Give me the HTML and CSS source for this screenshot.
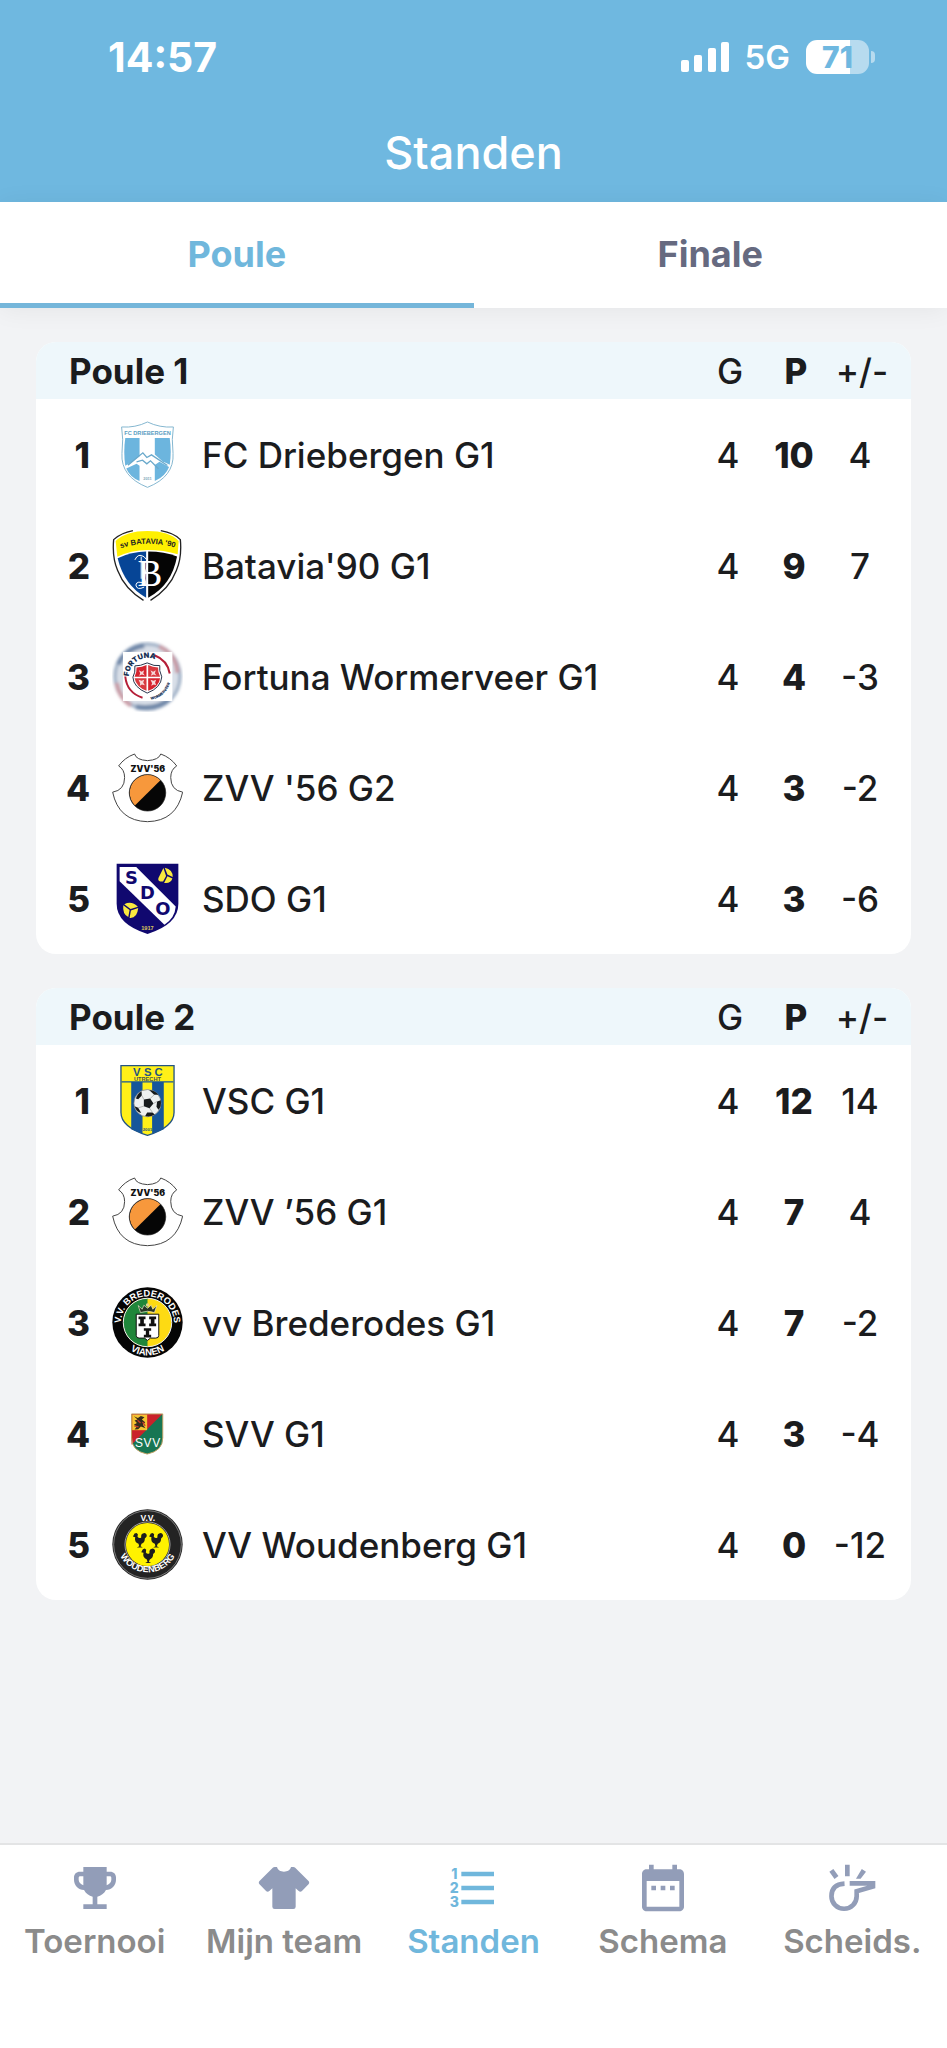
FILE: index.html
```html
<!DOCTYPE html>
<html lang="nl">
<head>
    <meta charset="UTF-8">
    <meta name="viewport" content="width=device-width, initial-scale=1.0">
    <title>Standen</title>
    <link rel="stylesheet" href="styles.css">
</head>
<body>
    <header class="header">
        <div class="status-bar">
            <span class="time">14:57</span>
            <div class="status-icons">
                <svg class="signal" viewBox="0 0 48 30" aria-hidden="true">
                    <rect x="0" y="18" width="8" height="12" rx="2"/>
                    <rect x="13" y="13" width="8" height="17" rx="2"/>
                    <rect x="27" y="6" width="8" height="24" rx="2"/>
                    <rect x="40" y="0" width="8" height="30" rx="2"/>
                </svg>
                <span class="network">5G</span>
                <div class="battery"><span class="battery-level">71</span></div>
            </div>
        </div>
        <h1 class="title">Standen</h1>
    </header>

    <nav class="tabs">
        <button type="button" class="tab active">Poule</button>
        <button type="button" class="tab">Finale</button>
    </nav>

    <main class="content">
        <section class="card">
            <table class="standings">
                <thead>
                    <tr>
                        <th class="group" colspan="3">Poule 1</th>
                        <th class="num">G</th>
                        <th class="num points">P</th>
                        <th class="num diff">+/-</th>
                    </tr>
                </thead>
                <tbody>
                    <tr>
                        <td class="rank">1</td>
                        <td class="crest">
                            <svg viewBox="38 31 214 214" aria-hidden="true">
                                <path d="M145 40Q182 58 223 55Q217 90 222 135Q226 205 145 237Q64 205 68 135Q73 90 67 55Q108 58 145 40Z" fill="#fff" stroke="#84b6d0" stroke-width="3"/>
                                <path d="M78 88H121V143L99 160L78 172Q72 130 78 88Z" fill="#6cb5de"/>
                                <path d="M167 88H212Q218 130 212 169L190 158L167 138Z" fill="#6cb5de"/>
                                <path d="M81 180L112 166L121 172V218Q91 205 81 180ZM167 170L181 160L210 176Q199 205 167 218Z" fill="#6cb5de"/>
                                <path d="M86 170L131 133L143 147L157 139L205 171M112 160L130 155L143 166L154 157L178 181" fill="none" stroke="#6aa9cb" stroke-width="4"/>
                                <text x="145" y="80" class="crest-text" font-size="17" fill="#5a9dc2">FC DRIEBERGEN</text>
                                <text x="145" y="216" class="crest-text" font-size="12" fill="#84a9bb">2011</text>
                            </svg>
                        </td>
                        <td class="team">FC Driebergen G1</td>
                        <td class="num">4</td>
                        <td class="num points">10</td>
                        <td class="num diff">4</td>
                    </tr>
                    <tr>
                        <td class="rank">2</td>
                        <td class="crest">
                            <svg viewBox="38 363 214 214" aria-hidden="true">
                                <path d="M101 365Q65 372 43 392Q38 445 55 485Q76 540 133 575M185 365Q225 372 244 392Q249 445 232 485Q211 540 154 575" fill="none" stroke="#222" stroke-width="4"/>
                                <path d="M49 396Q80 366 145 366Q210 366 239 396L236 436Q195 423 145 423Q95 423 54 444Z" fill="#fff001"/>
                                <path d="M55 448Q98 428 141 428V567Q75 530 55 448Z" fill="#064596"/>
                                <path d="M147 428Q196 428 234 443Q218 530 147 567Z" fill="#050505"/>
                                <path id="batavia-arc" d="M58 420Q145 390 234 418" fill="none"/>
                                <text class="crest-text" font-size="23" fill="#222"><textPath href="#batavia-arc" startOffset="50%">sv BATAVIA '90</textPath></text>
                                <text x="152" y="531" class="crest-letter" font-size="112" fill="#fff">B</text>
                                <path d="M107 453Q117 431 135 444Q153 458 138 490Q132 511 141 526Q112 513 110 529Q113 546 135 535M126 443V510M144 428V567" fill="none" stroke="#fff" stroke-width="3"/>
                            </svg>
                        </td>
                        <td class="team">Batavia'90 G1</td>
                        <td class="num">4</td>
                        <td class="num points">9</td>
                        <td class="num diff">7</td>
                    </tr>
                    <tr>
                        <td class="rank">3</td>
                        <td class="crest">
                            <svg viewBox="38 34 214 214" aria-hidden="true">
                                <defs><filter id="soft"><feGaussianBlur stdDeviation="5"/></filter></defs>
                                <g filter="url(#soft)" fill="none">
                                    <circle cx="145" cy="141" r="98" fill="#d9dfe8" stroke="#9fb0c6" stroke-width="10"/>
                                    <path d="M180 51Q232 75 235 130M52 160Q60 205 95 228" stroke="#c99ba5" stroke-width="13"/>
                                    <path d="M58 105Q75 58 135 48M110 232Q175 243 215 205" stroke="#6f87a8" stroke-width="15"/>
                                </g>
                                <rect x="71" y="67" width="149" height="148" fill="#fff"/>
                                <path d="M166 77Q205 92 212 132M78 141Q83 190 130 205" fill="none" stroke="#b51f38" stroke-width="6"/>
                                <path id="fortuna-arc" d="M89 141A56 56 0 0 1 168 90" fill="none"/>
                                <path id="wormer-arc" d="M134 211A70 70 0 0 0 215 140" fill="none"/>
                                <text class="crest-text heavy" font-size="22" fill="#173155"><textPath href="#fortuna-arc" startOffset="50%">FORTUNA</textPath></text>
                                <text class="crest-text heavy" font-size="11" fill="#173155"><textPath href="#wormer-arc" startOffset="50%">WORMERVEER</textPath></text>
                                <path d="M107 109Q122 110 144 100Q166 111 182 108Q179 122 188 142Q186 175 144 191Q102 173 101 143Q109 130 107 109Z" fill="#fff" stroke="#27334b" stroke-width="3"/>
                                <path d="M112 114Q129 113 142 106V142H106Q113 130 112 114ZM147 146H183Q180 172 147 184Z" fill="#d5242f"/>
                                <path d="M147 106Q160 113 177 114Q176 130 183 142H147ZM106 146H142V184Q111 172 106 146Z" fill="#d83a40"/>
                                <path d="M119 122l8 5 8-5-3 9 5 7-9-3-8 4 3-8zM154 122l8 5 8-5-3 9 5 7-9-3-8 4 3-8zM118 151l9 3 8-3-3 8 5 8-9-2-6 4 1-8zM154 151l9 3 8-3-3 8 3 8-7-2-8 4 3-8z" fill="#f7d8d9"/>
                            </svg>
                        </td>
                        <td class="team">Fortuna Wormerveer G1</td>
                        <td class="num">4</td>
                        <td class="num points">4</td>
                        <td class="num diff">-3</td>
                    </tr>
                    <tr>
                        <td class="rank">4</td>
                        <td class="crest">
                            <svg viewBox="38 365 214 214" aria-hidden="true">
                                <g id="zvv">
                                    <path d="M106 371Q111 389 145 391Q179 389 185 371Q215 382 233 407Q215 418 215 442Q215 480 251 486Q232 573 145 575Q58 573 40 486Q76 480 76 442Q76 418 58 407Q76 382 106 371Z" fill="#fff" stroke="#444" stroke-width="3"/>
                                    <circle cx="145" cy="488" r="55" fill="#060606"/>
                                    <path d="M107 526A54 54 0 0 1 184 450Z" fill="#f7983c"/>
                                    <circle cx="145" cy="488" r="55" fill="none" stroke="#222" stroke-width="2"/>
                                    <text x="146" y="425" class="crest-text heavy" font-size="26" fill="#111">ZVV'56</text>
                                </g>
                            </svg>
                        </td>
                        <td class="team">ZVV '56 G2</td>
                        <td class="num">4</td>
                        <td class="num points">3</td>
                        <td class="num diff">-2</td>
                    </tr>
                    <tr>
                        <td class="rank">5</td>
                        <td class="crest">
                            <svg viewBox="38 697 214 214" aria-hidden="true">
                                <path d="M52 699H238V820Q238 882 145 911Q52 882 52 820Z" fill="#10086f"/>
                                <path d="M61 709H111L230 828Q228 862 196 883L61 752Z" fill="#fff"/>
                                <g class="crest-text wide" font-size="54" fill="#10086f">
                                    <text x="97" y="759">S</text>
                                    <text x="145" y="806">D</text>
                                    <text x="191" y="853">O</text>
                                </g>
                                <path d="M193 712L178 742Q174 754 192 753L201 736ZM197 711L205 732L221 739Q222 717 197 711ZM205 737L195 757Q215 760 220 744Z" fill="#fae93f"/>
                                <path d="M72 824L91 839L87 860Q69 850 72 824ZM75 821L94 836L116 829Q98 810 75 821ZM117 833L95 840L91 863Q114 865 117 833Z" fill="#fae93f"/>
                                <text x="145" y="899" class="crest-text" font-size="17" fill="#d8c95c">1917</text>
                            </svg>
                        </td>
                        <td class="team">SDO G1</td>
                        <td class="num">4</td>
                        <td class="num points">3</td>
                        <td class="num diff">-6</td>
                    </tr>
                </tbody>
            </table>
        </section>

        <section class="card">
            <table class="standings">
                <thead>
                    <tr>
                        <th class="group" colspan="3">Poule 2</th>
                        <th class="num">G</th>
                        <th class="num points">P</th>
                        <th class="num diff">+/-</th>
                    </tr>
                </thead>
                <tbody>
                    <tr>
                        <td class="rank">1</td>
                        <td class="crest">
                            <svg viewBox="38 47 214 214" aria-hidden="true">
                                <path d="M65 49H225V190Q225 234 145 259Q65 234 65 190Z" fill="#fff018" stroke="#245482" stroke-width="4"/>
                                <path d="M67 98H223M98 98H128V251L98 239ZM161 98H192V239L161 251Z" fill="#17569a" stroke="#17569a" stroke-width="4"/>
                                <g class="crest-text" font-size="34" fill="#245482">
                                    <text x="113" y="79">V</text>
                                    <text x="146" y="79">S</text>
                                    <text x="178" y="79">C</text>
                                </g>
                                <text x="145" y="95" class="crest-text" font-size="17" fill="#464f50">UTRECHT</text>
                                <circle cx="145" cy="162" r="41" fill="#eef0f0" stroke="#777" stroke-width="2"/>
                                <path d="M134 151L153 148L163 163L151 177L134 171ZM110 148Q116 131 127 127L128 139L117 150ZM150 122Q169 124 178 137L165 137ZM174 157L185 153Q188 172 178 182L172 173ZM106 171L117 176L126 192Q111 187 106 171ZM144 190L160 190L167 196Q152 205 138 201Z" fill="#171a1c"/>
                                <path d="M128 139L134 151M153 148L165 137M163 163L174 157M151 177L160 190M134 171L117 176" stroke="#999" stroke-width="2"/>
                                <text x="145" y="247" class="crest-text" font-size="13" fill="#245482">2001</text>
                            </svg>
                        </td>
                        <td class="team">VSC G1</td>
                        <td class="num">4</td>
                        <td class="num points">12</td>
                        <td class="num diff">14</td>
                    </tr>
                    <tr>
                        <td class="rank">2</td>
                        <td class="crest"><svg viewBox="38 365 214 214" aria-hidden="true"><use href="#zvv"/></svg></td>
                        <td class="team">ZVV ’56 G1</td>
                        <td class="num">4</td>
                        <td class="num points">7</td>
                        <td class="num diff">4</td>
                    </tr>
                    <tr>
                        <td class="rank">3</td>
                        <td class="crest">
                            <svg viewBox="38 50 214 214" aria-hidden="true">
                                <circle cx="145" cy="157" r="106" fill="#050505"/>
                                <circle cx="145" cy="157" r="73" fill="#fdda13"/>
                                <path d="M145 84A73 73 0 0 0 145 230Z" fill="#20863a"/>
                                <circle cx="145" cy="157" r="73" fill="none" stroke="#eee" stroke-width="3"/>
                                <path id="brede-arc" d="M68 180A80 80 0 1 1 222 180" fill="none"/>
                                <path id="vianen-arc" d="M46 157A99 99 0 0 0 244 157" fill="none"/>
                                <text class="crest-text" font-size="28" fill="#fff"><textPath href="#brede-arc" startOffset="50%">V.V. BREDERODES</textPath></text>
                                <text class="crest-text" font-size="29" fill="#fff"><textPath href="#vianen-arc" startOffset="50%">VIANEN</textPath></text>
                                <path d="M111 132H179V196Q179 204 170 204H154L145 211L136 204H120Q111 204 111 196Z" fill="#fff" stroke="#111" stroke-width="3"/>
                                <path d="M118 139H139V147H134V160H139V168H118V160H123V147H118ZM150 139H171V147H166V160H171V168H150V160H155V147H150ZM134 174H156V182H150V194H156V202H134V194H140V182H134Z" fill="#111"/>
                                <path d="M117 106L129 117L134 105L145 114L156 105L161 117L173 106L166 127Q145 119 124 127Z" fill="#263323" stroke="#f6ead0" stroke-width="2"/>
                                <circle cx="145" cy="104" r="5" fill="#e3d28a"/>
                            </svg>
                        </td>
                        <td class="team">vv Brederodes G1</td>
                        <td class="num">4</td>
                        <td class="num points">7</td>
                        <td class="num diff">-2</td>
                    </tr>
                    <tr>
                        <td class="rank">4</td>
                        <td class="crest">
                            <svg viewBox="38 382 214 214" aria-hidden="true">
                                <path d="M97 430H191V502Q191 542 144 551Q97 542 97 502Z" fill="#177653"/>
                                <path d="M97 430H190L97 523Z" fill="#ca222b"/>
                                <path d="M99 432H144V479H99Z" fill="#f6c431"/>
                                <path d="M104 437l12 5 9-6 11 4-8 7 10 8-7 8 8 10-14-5-8 8-11 1 7-9-9-5 9-6-7-7 9-3z" fill="#342b1e"/>
                                <path d="M115 449l9 8M105 466l13 3M130 454l8 12" stroke="#c83a29" stroke-width="4"/>
                                <path d="M97 430H191V502Q191 542 144 551Q97 542 97 502Z" fill="none" stroke="#c0a064" stroke-width="3"/>
                                <g class="crest-text regular" font-size="36" fill="#fff">
                                    <text x="119" y="529">S</text>
                                    <text x="145" y="529">V</text>
                                    <text x="171" y="529">V</text>
                                </g>
                            </svg>
                        </td>
                        <td class="team">SVV G1</td>
                        <td class="num">4</td>
                        <td class="num points">3</td>
                        <td class="num diff">-4</td>
                    </tr>
                    <tr>
                        <td class="rank">5</td>
                        <td class="crest">
                            <svg viewBox="38 713 214 214" aria-hidden="true">
                                <circle cx="145" cy="820" r="106" fill="#232323"/>
                                <circle cx="145" cy="820" r="102" fill="none" stroke="#aaa" stroke-width="2"/>
                                <circle cx="145" cy="820" r="65" fill="#fff200"/>
                                <circle cx="145" cy="820" r="68" fill="none" stroke="#ddd" stroke-width="2"/>
                                <path id="woud-arc" d="M51 810A94 94 0 1 0 239 810" fill="none"/>
                                <text x="146" y="748" class="crest-text" font-size="26" fill="#fff">V.V.</text>
                                <text class="crest-text" font-size="27" fill="#fff"><textPath href="#woud-arc" startOffset="50%">WOUDENBERG</textPath></text>
                                <g id="rooster" fill="#1d1d1d">
                                    <path d="M101 796L106 787L112 785L116 789L115 797Q120 803 126 799Q124 786 136 785Q145 788 142 797L137 802Q137 815 127 818L124 825L131 829H113L120 825L118 818Q104 812 108 798Z"/>
                                </g>
                                <use href="#rooster" x="49" y="0"/>
                                <use href="#rooster" x="25" y="47"/>
                            </svg>
                        </td>
                        <td class="team">VV Woudenberg G1</td>
                        <td class="num">4</td>
                        <td class="num points">0</td>
                        <td class="num diff">-12</td>
                    </tr>
                </tbody>
            </table>
        </section>
    </main>

    <nav class="bottom-nav">
        <a href="#toernooi" class="nav-item">
            <svg class="nav-icon" viewBox="0 0 24 24" aria-hidden="true">
                <path d="M7 3h10v2h1.500c1.500 0 2.500 1 2.500 2.500v1c0 2.500-1.900 4.300-4.300 4.400-.8 1.500-2.100 2.500-3.700 2.900V19h4v2H7v-2h4v-3.200c-1.600-.4-2.900-1.400-3.700-2.900C4.900 12.800 3 11 3 8.500v-1C3 6 4 5 5.500 5H7zM7 7H5.700c-.5 0-.7.300-.7.700v.8c0 1 .8 2 2 2.300zm10 0v3.800c1.200-.3 2-1.300 2-2.300v-.8c0-.4-.2-.7-.7-.7z" fill-rule="evenodd"/>
            </svg>
            <span>Toernooi</span>
        </a>
        <a href="#team" class="nav-item">
            <svg class="nav-icon" viewBox="0 0 24 24" aria-hidden="true">
                <path d="M16 21H8a1 1 0 0 1-1-1v-7.900l-1.300 1.200c-.4.400-1 .4-1.400 0L1.500 10.400c-.4-.4-.4-1 0-1.400l5.700-5.700C7.400 3.100 7.700 3 8 3h1c.3 1.200 1.500 2 3 2s2.700-.8 3-2h1c.3 0 .6.100.8.300L22.500 9c.4.400.4 1 0 1.400l-2.800 2.900c-.4.400-1 .4-1.400 0L17 12.100V20a1 1 0 0 1-1 1z"/>
            </svg>
            <span>Mijn team</span>
        </a>
        <a href="#standen" class="nav-item active">
            <svg class="nav-icon" viewBox="0 0 24 24" aria-hidden="true">
                <path d="M7 5h14v2H7zM7 11h14v2H7zM7 17h14v2H7z"/>
                <g class="list-digits">
                    <text x="4" y="8">1</text>
                    <text x="4" y="14">2</text>
                    <text x="4" y="20">3</text>
                </g>
            </svg>
            <span>Standen</span>
        </a>
        <a href="#schema" class="nav-item">
            <svg class="nav-icon" viewBox="0 0 24 24" aria-hidden="true">
                <path d="M9 11H7v2h2zM13 11h-2v2h2zM17 11h-2v2h2zM19 4h-1V2h-2v2H8V2H6v2H5c-1.100 0-2 .9-2 2v14c0 1.100.9 2 2 2h14c1.100 0 2-.9 2-2V6c0-1.100-.9-2-2-2zm0 16H5V9h14z" fill-rule="evenodd"/>
            </svg>
            <span>Schema</span>
        </a>
        <a href="#scheids" class="nav-item">
            <svg class="nav-icon" viewBox="0 0 24 24" aria-hidden="true">
                <path d="M9 2h2v5H9zM2.300 5l1.700-1.100 2.200 3-1.700 1.200zM16.200 3.900L18 5l-2.300 3H13.700z"/>
                <path d="M8.800 10.100Q3.200 10.400 3.200 15.500A5.400 5.400 0 0 0 14 15.500V13.400L21 11.400V10H11" fill="none" stroke="currentColor" stroke-width="2"/>
            </svg>
            <span>Scheids.</span>
        </a>
    </nav>
</body>
</html>
```
FILE: styles.css
```css
/* Base styles */
* {
    margin: 0;
    padding: 0;
    box-sizing: border-box;
}

body {
    min-height: 100vh;
    display: flex;
    flex-direction: column;
    background-color: #f2f3f5;
    color: #1b1c1e;
    font-family: Inter, "Liberation Sans", sans-serif;
}

/* Header */
.header {
    background-color: #6fb8e0;
    color: #fff;
}

.status-bar {
    display: flex;
    justify-content: space-between;
    align-items: center;
    height: 114px;
    padding: 0 72px 0 108px;
}

.time {
    font-size: 41px;
    font-weight: 700;
}

.status-icons {
    display: flex;
    align-items: center;
    gap: 16px;
}

.signal {
    width: 48px;
    height: 30px;
    fill: #fff;
}

.network {
    font-size: 33px;
    font-weight: 600;
}

.battery {
    position: relative;
    width: 63px;
    margin-right: 6px;
    border-radius: 11px;
    background: linear-gradient(to right, #fff 70%, #b7dbef 70%);
    color: #6fb8e0;
    font-size: 30px;
    font-weight: 800;
    line-height: 34px;
    text-align: center;
}

.battery::after {
    content: "";
    position: absolute;
    top: 11px;
    right: -6px;
    width: 4px;
    height: 12px;
    border-radius: 0 6px 6px 0;
    background: #b7dbef;
}

.title {
    padding-bottom: 10px;
    font-size: 45px;
    font-weight: 500;
    line-height: 78px;
    text-align: center;
}

/* Tabs */
.tabs {
    display: flex;
    background-color: #fff;
    box-shadow: 0 2px 24px rgba(0, 0, 0, 0.06);
}

.tab {
    flex: 1;
    padding: 4px 0 0;
    border: none;
    border-bottom: 5px solid transparent;
    background: none;
    color: #666a80;
    font-family: inherit;
    font-size: 36px;
    font-weight: 700;
    line-height: 97px;
    cursor: pointer;
}

.tab.active {
    color: #70b7dc;
    border-bottom-color: #75b6da;
}

/* Standings */
.content {
    flex: 1;
    display: flex;
    flex-direction: column;
    gap: 34px;
    padding: 34px 36px;
}

.card {
    border-radius: 20px;
    background-color: #fff;
    overflow: hidden;
}

.standings {
    width: 100%;
    border-collapse: collapse;
    font-size: 35px;
    font-weight: 500;
}

.standings thead {
    background-color: #eef7fb;
}

.standings th {
    height: 57px;
    padding-left: 4px;
    font-weight: 500;
}

.standings .group {
    padding-left: 33px;
    font-weight: 700;
    text-align: left;
}

.standings td {
    height: 111px;
}

.rank {
    width: 54px;
    font-weight: 800;
    text-align: right;
}

.crest {
    width: 112px;
    padding-left: 22px;
}

.crest svg {
    display: block;
    width: 71px;
    height: 71px;
}

.num {
    width: 66px;
    text-align: center;
}

.standings .points {
    font-weight: 800;
}

.diff {
    width: 84px;
    padding-right: 18px;
}

/* Lettering inside the club crests */
.crest-text {
    font-family: "Liberation Sans", sans-serif;
    font-weight: 700;
    text-anchor: middle;
}

.crest-text.heavy {
    font-family: Inter, sans-serif;
    font-weight: 900;
}

.crest-text.wide {
    font-family: "DejaVu Sans", sans-serif;
}

.crest-text.regular {
    font-weight: 400;
}

.crest-letter {
    font-family: "Liberation Serif", serif;
    text-anchor: middle;
}

/* Bottom navigation */
.bottom-nav {
    display: grid;
    grid-template-columns: repeat(5, 1fr);
    padding: 15px 0 82px;
    border-top: 2px solid #e3e4e5;
    background-color: #fff;
}

.nav-item {
    display: flex;
    flex-direction: column;
    align-items: center;
    color: #8b8b8b;
    font-size: 33px;
    font-weight: 600;
    line-height: 50px;
    text-decoration: none;
    white-space: nowrap;
}

.nav-icon {
    width: 56px;
    height: 56px;
    color: #929db8;
    fill: currentColor;
}

.nav-item.active,
.nav-item.active .nav-icon {
    color: #70b7dc;
}

.list-digits {
    font-size: 6px;
    font-weight: 800;
    text-anchor: middle;
}
```
